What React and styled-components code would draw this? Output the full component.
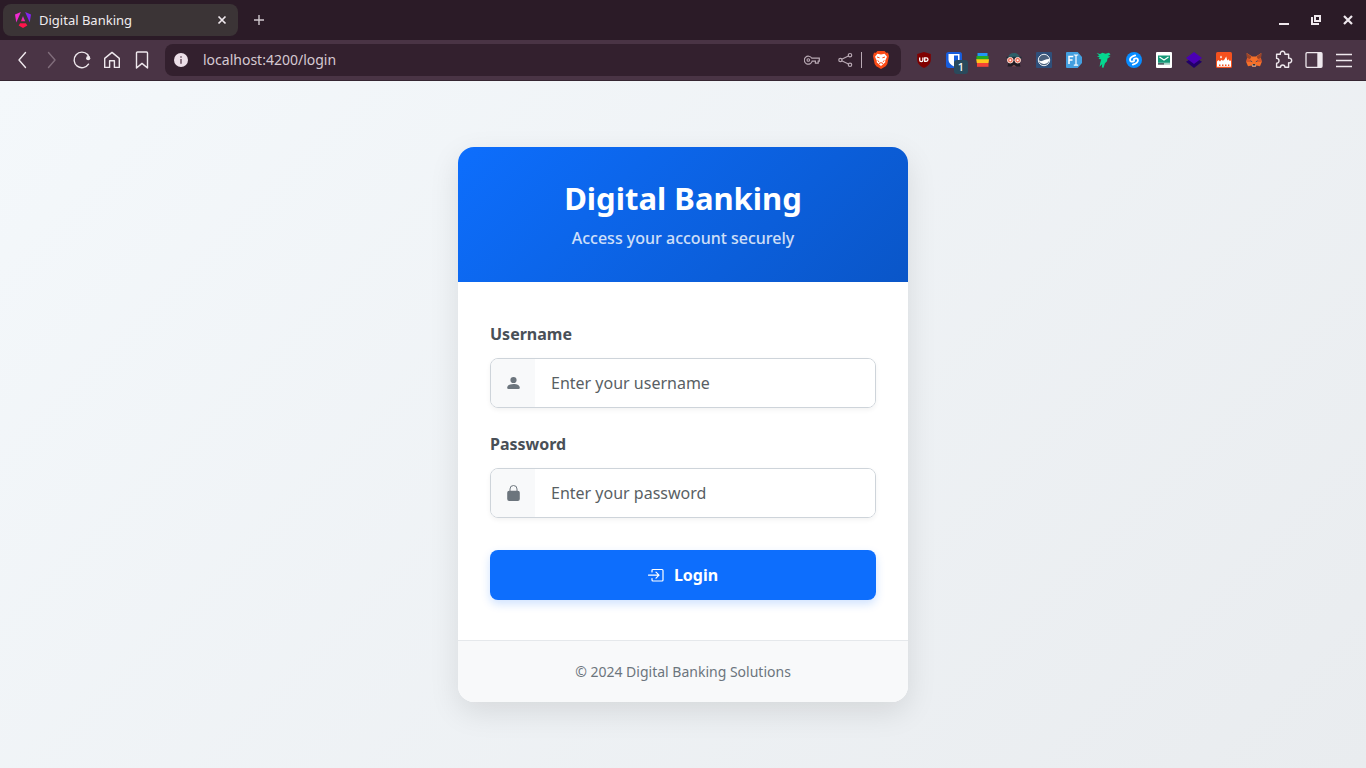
import React from 'react';
import styled, { createGlobalStyle } from 'styled-components';

const GlobalStyle = createGlobalStyle`
  * { box-sizing: border-box; }
  body { margin: 0; font-family: "Noto Sans", sans-serif; }
  button, input { font-family: inherit; margin: 0; }
  svg { display: block; flex: none; }
`;

const Page = styled.div`
  display: flex;
  flex-direction: column;
  min-height: 100vh;
`;

const TabStrip = styled.header`
  display: flex;
  align-items: center;
  height: 40px;
  padding: 0 2px 0 3px;
  background: #2b1b27;
`;

const Tab = styled.div`
  display: flex;
  align-items: center;
  gap: 8px;
  width: 235px;
  height: 32px;
  padding: 0 6px 0 12px;
  border-radius: 8px;
  background: #3b3436;
  color: #f1ecef;
  font-size: 13px;
`;

const TabTitle = styled.span`
  flex: 1;
`;

const IconButton = styled.button`
  display: flex;
  align-items: center;
  justify-content: center;
  width: ${(p) => p.$width || 30}px;
  height: ${(p) => p.$height || 30}px;
  padding: 0;
  border: 0;
  background: none;
  color: ${(p) => p.$color || '#efe8ed'};
`;

const WindowControls = styled.div`
  display: flex;
  margin-left: auto;
`;

const Toolbar = styled.nav`
  display: flex;
  align-items: center;
  gap: 8px;
  height: 41px;
  padding: 0 7px;
  background: #4a3445;
  border-bottom: 1px solid #352531;
`;

const Group = styled.div`
  display: flex;
  gap: ${(p) => p.$gap || 0}px;
`;

const AddressBar = styled.div`
  display: flex;
  flex: 1;
  align-items: center;
  height: 32px;
  padding: 0 5px 0 1px;
  border-radius: 8px;
  background: #33202e;
`;

const AddressInput = styled.input`
  flex: 1;
  min-width: 0;
  padding: 0 7px 2px;
  border: 0;
  outline: 0;
  background: none;
  color: #d6c9d2;
  font-size: 14px;
`;

const AddressTools = styled.div`
  display: flex;
  align-items: center;
`;

const Divider = styled.span`
  width: 1px;
  height: 16px;
  margin-right: 4px;
  background: #b9a9b4;
`;

const Main = styled.main`
  display: flex;
  flex: 1;
  align-items: center;
  justify-content: center;
  padding: 24px;
  background: linear-gradient(135deg, #f4f8fb 0%, #e9ecef 100%);
`;

const Card = styled.section`
  width: 100%;
  max-width: 450px;
  overflow: hidden;
  border-radius: 16px;
  background: #fff;
  box-shadow: 0 10px 30px rgba(0, 0, 0, 0.1);
`;

const CardHeader = styled.header`
  padding: 32px;
  background: linear-gradient(135deg, #0d6efd 0%, #0a56c8 100%);
  color: #fff;
  text-align: center;
`;

const Title = styled.h1`
  margin: 0 0 9px;
  font-size: 31px;
  font-weight: 700;
  line-height: 38px;
`;

const Subtitle = styled.p`
  margin: 0;
  font-size: 16px;
  font-weight: 500;
  line-height: 24px;
  opacity: 0.8;
`;

const Form = styled.form`
  padding: 40px 32px;
`;

const Field = styled.div`
  margin-bottom: ${(p) => (p.$last ? 32 : 24)}px;
`;

const Label = styled.label`
  display: block;
  margin-bottom: 12px;
  color: #495057;
  font-size: 16px;
  font-weight: 700;
  line-height: 24px;
`;

const InputGroup = styled.div`
  display: flex;
  height: 50px;
  overflow: hidden;
  border: 1px solid #ced4da;
  border-radius: 8px;
  box-shadow: 0 2px 5px rgba(0, 0, 0, 0.05);
`;

const Addon = styled.span`
  display: flex;
  align-items: center;
  justify-content: center;
  width: 44px;
  background: #f8f9fa;
  color: #6c757d;
`;

const TextInput = styled.input`
  flex: 1;
  min-width: 0;
  padding: 0 16px;
  border: 0;
  outline: 0;
  background: #fff;
  color: #212529;
  font-size: 16px;
  &::placeholder { color: #595f64; opacity: 1; }
`;

const LoginButton = styled.button`
  display: flex;
  align-items: center;
  justify-content: center;
  gap: 10px;
  width: 100%;
  height: 50px;
  border: 0;
  border-radius: 8px;
  background: #0d6efd;
  color: #fff;
  font-size: 16px;
  font-weight: 700;
  box-shadow: 0 4px 10px rgba(13, 110, 253, 0.2);
`;

const CardFooter = styled.footer`
  padding: 20px;
  border-top: 1px solid #e5e8eb;
  background: #f8f9fa;
  color: #6c757d;
  font-size: 14px;
  line-height: 21px;
  text-align: center;
`;

function Icon({ size = 16, box = 16, children, ...rest }) {
  return (
    <svg width={size} height={size} viewBox={`0 0 ${box} ${box}`} fill="none" aria-hidden="true" {...rest}>
      {children}
    </svg>
  );
}

const line = { stroke: 'currentColor', strokeWidth: 1.4, strokeLinecap: 'round', strokeLinejoin: 'round' };

const AngularLogo = () => (
  <svg width="16" height="16" viewBox="0 0 16 16" aria-hidden="true">
    <defs>
      <linearGradient id="angular" x1="0" y1="1" x2="1" y2="0">
        <stop offset="0" stopColor="#ff174f" />
        <stop offset="0.5" stopColor="#e82bc0" />
        <stop offset="1" stopColor="#7b22f5" />
      </linearGradient>
    </defs>
    <path d="M0 2.5 5.9 0 1.3 10.5Z" fill="#f02ad0" />
    <path d="M10.1 0 16 2.5 14.7 10.5Z" fill="#8424ef" />
    <path d="M8 4.1 10.1 9.3H5.9Z" fill="url(#angular)" />
    <path d="M5.1 11.3H10.9L12.3 13.4 8 16 3.7 13.4Z" fill="#ff154c" />
  </svg>
);

const toolbarItems = [
  { name: 'Back', art: <Icon size={20} box={20} {...line}><path d="M13.5 2.5 7 10 13.5 17.5" /></Icon> },
  { name: 'Forward', color: '#806d7b', art: <Icon size={20} box={20} {...line}><path d="M6.5 2.5 13 10 6.5 17.5" /></Icon> },
  { name: 'Reload', art: <Icon size={20} box={20} {...line}><path d="M15.6 4.6A7.8 7.8 0 1 0 16.5 14.2" /><circle cx="16.2" cy="8.2" r="2.1" fill="currentColor" stroke="none" /><path d="M15.6 4.6 17.2 7.4" /></Icon> },
  { name: 'Home', art: <Icon size={20} box={20} {...line}><path d="M2.7 8.4 10 2.4 17.3 8.4V17.4H12.4V10.8H7.6V17.4H2.7Z" /></Icon> },
  { name: 'Bookmark', art: <Icon size={20} box={20} {...line}><path d="M4.5 3Q4.5 2 5.5 2H14.5Q15.5 2 15.5 3V18L10 13.4 4.5 18Z" /></Icon> },
];

const extensionItems = [
  {
    name: 'uBlock Origin',
    art: (
      <Icon>
        <path d="M8 0 14.8 2V7.5C14.8 11.5 12 14 8 16 4 14 1.2 11.5 1.2 7.5V2Z" fill="#800000" />
        <path d="M3.7 5.5V8A1.6 1.6 0 0 0 6.9 8V5.5" stroke="#fff" strokeWidth="1.3" />
        <path d="M8.7 5.8H10.2A1.8 1.8 0 0 1 10.2 9.4H8.7Z" stroke="#fff" strokeWidth="1.3" />
      </Icon>
    ),
  },
  {
    name: 'Bitwarden',
    badge: '1',
    art: (
      <Icon>
        <rect width="16" height="16" rx="2.5" fill="#175ddc" />
        <path d="M2.5 2H13.5V8C13.5 11 11 13 8 14.5 5 13 2.5 11 2.5 8Z" fill="#fff" />
        <path d="M8 3.5H12V8C12 10 10.5 11.5 8 12.8Z" fill="#175ddc" />
      </Icon>
    ),
  },
  {
    name: 'Colour stack',
    art: (
      <Icon>
        <path d="M1.5 1H11.5V4.5H1.5Z" fill="#2196f3" />
        <path d="M.5 4H12.5V8H.5Z" fill="#22a922" />
        <path d="M.2 7.3H13L12.6 11H.8Z" fill="#ffc51b" />
        <path d="M1 11H12.5V14.8H1Z" fill="#f44336" />
      </Icon>
    ),
  },
  {
    name: 'Incognito face',
    art: (
      <Icon>
        <path d="M2.2 6C2.5 2.8 4.5 1 8 1S13.5 2.8 13.8 6Z" fill="#2d6069" />
        <path d="M3 9H13L14.5 14.5H1.5Z" fill="#211d25" />
        <path d="M.5 5.6H15.5" stroke="#1d3038" strokeWidth="1.6" />
        <circle cx="4.3" cy="8.2" r="2.8" fill="#ef6b55" stroke="#f6dfd5" strokeWidth="1" />
        <circle cx="11.7" cy="8.2" r="2.8" fill="#ef6b55" stroke="#f6dfd5" strokeWidth="1" />
        <circle cx="4.3" cy="8.2" r="1" fill="#fff" />
        <circle cx="11.7" cy="8.2" r="1" fill="#fff" />
        <path d="M5.5 14.5 8 13 10.5 14.5Z" fill="#91565d" />
      </Icon>
    ),
  },
  {
    name: 'Night wave',
    art: (
      <Icon>
        <rect width="16" height="16" rx="1" fill="#2f4f7a" />
        <circle cx="8" cy="8" r="5.7" fill="#4a607c" stroke="#e7edf2" />
        <path d="M2.5 7.8C5.5 11.4 8 6.8 13.6 7.1A5.7 5.7 0 0 1 2.5 7.8Z" fill="#fff" />
      </Icon>
    ),
  },
  {
    name: 'Font inspector',
    art: (
      <Icon>
        <path d="M1 0H11.7L16 5V11L11.7 16H1Q0 16 0 15V1Q0 0 1 0Z" fill="#439fe0" />
        <path d="M3 12V4.5H7.3M3 8H6.5" stroke="#fff" strokeWidth="1.5" />
        <path d="M7.8 3H9.2L10 3.6 10.8 3H12.2M10 3.6V12.7M7.8 13.2H9.2L10 12.6 10.8 13.2H12.2" stroke="#fff" strokeWidth="1.2" />
      </Icon>
    ),
  },
  {
    name: 'Green bird',
    art: (
      <Icon>
        <path d="M.5 1 4 2 6.5.8 9.5 1.8 13 .8 14.5 2.5 11.8 4 14.5 4.6 11.5 6.5 11 9.3 9 11.3 7.5 15.8 5.8 15.5 6.2 12 3.6 14.8 4.2 11 5.2 7.5 2.5 6.8 3.8 5.5 1 4.2 3.5 3.5Z" fill="#05d790" />
      </Icon>
    ),
  },
  {
    name: 'Shazam',
    art: (
      <Icon>
        <circle cx="8" cy="8" r="8" fill="#088cff" />
        <path d="M9.2 3.4C7.2 4 4 5.5 4 7.7 4 9.6 6 10.5 8.2 8.7M6.8 12.6C8.8 12 12 10.5 12 8.3 12 6.4 10 5.5 7.8 7.3" stroke="#fff" strokeWidth="1.8" strokeLinecap="round" />
      </Icon>
    ),
  },
  {
    name: 'Mail',
    art: (
      <Icon>
        <rect width="16" height="16" rx="1" fill="#fff" />
        <path d="M2 3.5H14V10.8H2Z" fill="#159978" />
        <path d="M3.5 5 8 8 12.5 5" stroke="#fff" strokeWidth="1.1" />
        <path d="M2 11.9H8" stroke="#293b44" strokeWidth="1.4" />
        <path d="M8 11.9H14" stroke="#8bc5b4" strokeWidth="1.4" />
      </Icon>
    ),
  },
  {
    name: 'Layers',
    art: (
      <Icon>
        <path d="M0 9.7 8 5 16 9.7 8 16Z" fill="#210068" />
        <path d="M0 6 8 0 16 6 8 12Z" fill="#4b00b4" />
      </Icon>
    ),
  },
  {
    name: 'Campfire',
    art: (
      <Icon>
        <rect width="16" height="16" rx="1.5" fill="#f4511e" />
        <path d="M1 14.8V9.5L2.5 8 4 9.5 5.5 7.8 7 8.8 8.5 7.5 10.2 4.5 11.3 8.5 12.7 7.3 13.6 9 15 8.6V14.8Z" fill="#fff" />
        <path d="M5 3.5 6 5.2 5 6.5 4 5.2Z" fill="#fff" />
        <path d="M3 13.2H4.5M6 13.2H7.5M9 13.2H10.5M12 13.2H13.3" stroke="#f4511e" strokeWidth="1.4" />
      </Icon>
    ),
  },
  {
    name: 'MetaMask',
    art: (
      <Icon>
        <path d="M.7 1 6.2 4.5H9.8L15.3 1 15 6.2 15.8 10 14 14.3 10.5 13.5 9.5 15H6.5L5.5 13.5 2 14.3.2 10 1 6.2Z" fill="#f5702a" />
        <path d="M.7 1 5.5 4.8 4 7 1 6.2ZM15.3 1 10.5 4.8 12 7 15 6.2Z" fill="#9b4428" />
        <path d="M1 6.5 5 8 4.5 10 .5 10ZM15 6.5 11 8 11.5 10 15.5 10Z" fill="#d8552a" />
        <path d="M4.4 8.8 6.2 9.8M11.6 8.8 9.8 9.8" stroke="#4b4858" strokeWidth="1" />
        <path d="M6.2 12.3H9.8L10 14.5H6Z" fill="#b9a7a4" />
        <path d="M6.8 12H9.2V13.5H6.8Z" fill="#343332" />
      </Icon>
    ),
  },
  {
    name: 'Extensions',
    art: (
      <Icon size={20} box={20} {...line}>
        <path d="M3 4.2H6.4A2.3 2.3 0 1 1 10.8 4.2H14.6V8.2A2.4 2.4 0 1 1 14.6 12.8V17.2H10.9A2.2 2.2 0 0 0 6.5 17.2H2.6V13.2A2.4 2.4 0 0 0 2.6 8.4V4.2Z" />
      </Icon>
    ),
  },
  {
    name: 'Side panel',
    art: (
      <Icon size={18} box={18}>
        <rect x="1" y="1.7" width="16" height="14.6" rx="1" stroke="currentColor" strokeWidth="1.3" />
        <path d="M12.3 2H17V16H12.3Z" fill="currentColor" />
      </Icon>
    ),
  },
  { name: 'Menu', art: <Icon size={18} box={18}><path d="M1 3.5H17M1 9.5H17M1 15.5H17" stroke="currentColor" strokeWidth="1.3" /></Icon> },
];

const ExtensionButton = styled(IconButton)`
  position: relative;
`;

const Badge = styled.span`
  position: absolute;
  right: 1px;
  bottom: 1px;
  width: 14px;
  height: 14px;
  border-radius: 3px;
  background: #2a4a5c;
  color: #fff;
  font-size: 11px;
  font-weight: 500;
  line-height: 14px;
  text-align: center;
`;

function BrowserChrome() {
  return (
    <>
      <TabStrip>
        <Tab>
          <AngularLogo />
          <TabTitle>Digital Banking</TabTitle>
          <IconButton $width={20} $height={20} aria-label="Close tab">
            <Icon size={10} box={10}><path d="M1.5 1.5 8.5 8.5M8.5 1.5 1.5 8.5" stroke="currentColor" strokeWidth="1.7" /></Icon>
          </IconButton>
        </Tab>
        <IconButton $width={42} $color="#d1c8ce" aria-label="New tab">
          <Icon size={12} box={12}><path d="M6 1V11M1 6H11" stroke="currentColor" strokeWidth="1.4" /></Icon>
        </IconButton>
        <WindowControls>
          <IconButton $width={32} aria-label="Minimize">
            <Icon size={12} box={12}><path d="M1 10H11" stroke="currentColor" strokeWidth="2" /></Icon>
          </IconButton>
          <IconButton $width={32} aria-label="Restore">
            <Icon size={12} box={12}><path d="M5 2H10V7H5ZM2 3V10H9" stroke="currentColor" strokeWidth="2" /></Icon>
          </IconButton>
          <IconButton $width={32} aria-label="Close window">
            <Icon size={12} box={12}><path d="M2 2 10 10M10 2 2 10" stroke="currentColor" strokeWidth="2.2" /></Icon>
          </IconButton>
        </WindowControls>
      </TabStrip>
      <Toolbar aria-label="Browser toolbar">
        <Group>
          {toolbarItems.map((item) => (
            <IconButton key={item.name} $color={item.color} aria-label={item.name}>{item.art}</IconButton>
          ))}
        </Group>
        <AddressBar>
          <IconButton aria-label="Site information" $color="#ecdfe8">
            <Icon>
              <circle cx="8" cy="8" r="7" fill="currentColor" />
              <path d="M8 7V11.7M8 4.2V5.8" stroke="#705766" strokeWidth="1.6" />
            </Icon>
          </IconButton>
          <AddressInput aria-label="Address" defaultValue="localhost:4200/login" />
          <AddressTools>
            <Group $gap={4}>
              <IconButton aria-label="Passwords" $color="#b9a9b4">
                <Icon>
                  <path d="M7.8 6.2H15.3V9.2H14.2V11.2H11.4V9.2H8.2A4 4 0 1 1 7.8 6.2Z" stroke="currentColor" strokeWidth="1.2" />
                  <circle cx="4.3" cy="8" r="1.3" stroke="currentColor" strokeWidth="1.1" />
                </Icon>
              </IconButton>
              <IconButton aria-label="Share" $color="#b9a9b4">
                <Icon>
                  <path d="M3.7 7.2 10.4 4M3.7 8.8 10.4 12" stroke="currentColor" strokeWidth="1.2" />
                  <circle cx="2.4" cy="8" r="1.6" stroke="currentColor" strokeWidth="1.2" />
                  <circle cx="12" cy="3.2" r="1.7" stroke="currentColor" strokeWidth="1.2" />
                  <circle cx="12" cy="12.8" r="1.7" stroke="currentColor" strokeWidth="1.2" />
                </Icon>
              </IconButton>
            </Group>
            <Divider />
            <IconButton aria-label="Brave Shields">
              <Icon size={18} box={18}>
                <path d="M5.5 0H12.5L14.2 1.7H16L17 5 15.3 13 13.7 15.2 9 18 4.3 15.2 2.7 13 1 5 2 1.7H3.8Z" fill="#fb4b16" />
                <path d="M5.4 2.8 9 3.4 12.6 2.8 15 5.8 13.2 9.7 13.3 11.3 9 15 4.7 11.3 4.8 9.7 3 5.8Z" fill="#fff" />
                <path d="M5 6 7.6 6.8M13 6 10.4 6.8M5.6 9.6 7.2 10.8M12.4 9.6 10.8 10.8M7 12.6 9 11.6 11 12.6" stroke="#fb4b16" strokeWidth="1" />
              </Icon>
            </IconButton>
          </AddressTools>
        </AddressBar>
        <Group>
          {extensionItems.map((item) => (
            <ExtensionButton key={item.name} aria-label={item.name}>
              {item.art}
              {item.badge && <Badge>{item.badge}</Badge>}
            </ExtensionButton>
          ))}
        </Group>
      </Toolbar>
    </>
  );
}

export default function App() {
  return (
    <>
      <GlobalStyle />
      <Page>
        <BrowserChrome />
        <Main>
          <Card>
            <CardHeader>
              <Title>Digital Banking</Title>
              <Subtitle>Access your account securely</Subtitle>
            </CardHeader>
            <Form onSubmit={(e) => e.preventDefault()}>
              <Field>
                <Label htmlFor="username">Username</Label>
                <InputGroup>
                  <Addon>
                    <Icon>
                      <circle cx="8.5" cy="5" r="3.1" fill="currentColor" />
                      <path d="M2.2 12.7C2.2 10.6 4.8 9 8.5 9S14.8 10.6 14.8 12.7Q14.8 14 13.5 14H3.5Q2.2 14 2.2 12.7Z" fill="currentColor" />
                    </Icon>
                  </Addon>
                  <TextInput id="username" type="text" placeholder="Enter your username" />
                </InputGroup>
              </Field>
              <Field $last>
                <Label htmlFor="password">Password</Label>
                <InputGroup>
                  <Addon>
                    <Icon>
                      <rect x="2.2" y="5.8" width="12.6" height="10.2" rx="2" fill="currentColor" />
                      <path d="M5 6.5V4A3.5 3.5 0 0 1 12 4V6.5" stroke="currentColor" />
                    </Icon>
                  </Addon>
                  <TextInput id="password" type="password" placeholder="Enter your password" />
                </InputGroup>
              </Field>
              <LoginButton type="submit">
                <Icon>
                  <path d="M4 5V3.5Q4 2.5 5 2.5H14Q15 2.5 15 3.5V13Q15 14 14 14H5Q4 14 4 13V11.5" stroke="currentColor" strokeWidth="1.2" strokeLinecap="round" />
                  <path d="M.5 8.2H11M8 5.2 11 8.2 8 11.2" stroke="currentColor" strokeWidth="1.2" strokeLinecap="round" strokeLinejoin="round" />
                </Icon>
                Login
              </LoginButton>
            </Form>
            <CardFooter>© 2024 Digital Banking Solutions</CardFooter>
          </Card>
        </Main>
      </Page>
    </>
  );
}
